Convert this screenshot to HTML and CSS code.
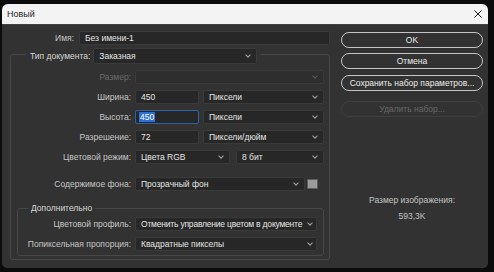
FILE: index.html
```html
<!DOCTYPE html>
<html lang="ru">
<head>
    <meta charset="UTF-8" />
    <title>Новый</title>
    <link rel="stylesheet" href="styles.css">
</head>
<body>
    <div class="window">
        <div class="titlebar">
            <span class="title">Новый</span>
            <svg class="close" width="8" height="8" viewBox="0 0 8 8">
                <path d="M0.5 0.5 L7.5 7.5 M7.5 0.5 L0.5 7.5" stroke="#222" stroke-width="1" fill="none" />
            </svg>
        </div>
        <div class="dialog">
            <div class="left">
                <div class="row name-row">
                    <span class="label name-label">Имя:</span>
                    <div class="field name-field">Без имени-1</div>
                </div>

                <div class="group outer">
                    <div class="group-head">
                        <span class="head-label">Тип документа:</span>
                        <div class="field select doc-type"><span class="txt">Заказная</span><i class="chev"></i></div>
                    </div>

                    <div class="rows">
                        <div class="row">
                            <span class="label disabled">Размер:</span>
                            <div class="field select wide off"><span class="txt"></span><i class="chev"></i></div>
                        </div>
                        <div class="row">
                            <span class="label">Ширина:</span>
                            <div class="field num">450</div>
                            <div class="field select unit"><span class="txt">Пиксели</span><i class="chev"></i></div>
                        </div>
                        <div class="row">
                            <span class="label">Высота:</span>
                            <div class="field num focus"><span class="sel">450</span></div>
                            <div class="field select unit"><span class="txt">Пиксели</span><i class="chev"></i></div>
                        </div>
                        <div class="row">
                            <span class="label">Разрешение:</span>
                            <div class="field num">72</div>
                            <div class="field select unit"><span class="txt">Пиксели/дюйм</span><i class="chev"></i></div>
                        </div>
                        <div class="row">
                            <span class="label">Цветовой режим:</span>
                            <div class="field select mode"><span class="txt">Цвета RGB</span><i class="chev"></i></div>
                            <div class="field select depth"><span class="txt">8 бит</span><i class="chev"></i></div>
                        </div>
                    </div>

                    <div class="row bg-row">
                        <span class="label">Содержимое фона:</span>
                        <div class="field select bg"><span class="txt">Прозрачный фон</span><i class="chev"></i></div>
                        <span class="swatch"></span>
                    </div>

                    <div class="group inner">
                        <div class="inner-head">Дополнительно</div>
                        <div class="rows inner-rows">
                            <div class="row">
                                <span class="label">Цветовой профиль:</span>
                                <div class="field select profile"><span class="txt tight">Отменить управление цветом в документе</span><i class="chev"></i></div>
                            </div>
                            <div class="row">
                                <span class="label">Попиксельная пропорция:</span>
                                <div class="field select profile"><span class="txt">Квадратные пикселы</span><i class="chev"></i></div>
                            </div>
                        </div>
                    </div>
                </div>
            </div>

            <div class="right">
                <button class="btn ok">OK</button>
                <button class="btn cancel">Отмена</button>
                <button class="btn save">Сохранить набор параметров...</button>
                <button class="btn remove" disabled>Удалить набор...</button>
                <div class="info">
                    <div>Размер изображения:</div>
                    <div>593,3K</div>
                </div>
            </div>
        </div>
    </div>
</body>
</html>
```

FILE: styles.css
```css
/* Reset and general styles */
* {
    box-sizing: border-box;
    margin: 0;
    padding: 0;
}
body {
    width: 494px;
    height: 272px;
    overflow: hidden;
    background-color: #0b0b0b;
    font-family: "Liberation Sans", Arial, sans-serif;
    font-size: 8.5px;
    color: #c6c6c6;
}

/* Window frame */
.window {
    margin: 4px 0 0 2px;
    width: 486px;
    height: 264px;
    background-color: #323232;
    border-radius: 6px 6px 5px 5px;
    overflow: hidden;
}
.titlebar {
    height: 20px;
    display: flex;
    justify-content: space-between;
    align-items: center;
    padding: 0 6px 0 5px;
    background-color: #f3f3f3;
    color: #1f1f1f;
    font-size: 9px;
}
.dialog {
    display: flex;
    gap: 11px;
    height: 244px;
    padding: 6px 5px 0 8px;
    border-top: 1px solid #3e3e3e;
}

/* Left column */
.left {
    width: 320px;
}
.row {
    display: flex;
    align-items: center;
    gap: 4px;
    height: 14px;
}
.label {
    width: 114px;
    text-align: right;
    white-space: nowrap;
}
.label.disabled {
    color: #6a6a6a;
}
.name-row {
    gap: 5px;
}
.name-label {
    width: 64px;
}
.field {
    height: 14px;
    display: flex;
    align-items: center;
    padding: 0 5px;
    background-color: #272727;
    border: 1px solid #3a3a3a;
    border-radius: 2px;
    color: #e4e4e4;
    white-space: nowrap;
}
.txt {
    flex: 1;
    overflow: hidden;
}
.tight {
    letter-spacing: -0.2px;
}
.name-field {
    width: 251px;
}
.chev {
    width: 4px;
    height: 4px;
    margin: -3px 1px 0 3px;
    border-right: 1px solid #a4a4a4;
    border-bottom: 1px solid #a4a4a4;
    transform: rotate(45deg);
    flex-shrink: 0;
}
.off {
    background-color: #2e2e2e;
}
.off .chev {
    border-color: #5a5a5a;
}

/* Document group */
.group {
    border: 1px solid #474747;
    border-radius: 3px;
}
.outer {
    margin-top: 9px;
    padding: 0 5px 3px 6px;
}
.group-head {
    width: fit-content;
    height: 16px;
    display: flex;
    align-items: center;
    gap: 3px;
    margin: -7px 0 0 9px;
    padding: 0 4px;
    background-color: #323232;
    color: #d6d6d6;
}
.doc-type {
    width: 164px;
    height: 16px;
}
.rows {
    display: flex;
    flex-direction: column;
    gap: 6px;
    margin-top: 6px;
}
.wide {
    width: 189px;
}
.num {
    width: 64px;
}
.unit {
    width: 121px;
}
.focus {
    border-color: #2b62ad;
    padding-left: 3px;
}
.sel {
    background-color: #2f6fd2;
    color: #ffffff;
    padding: 0 1px;
}
.mode {
    width: 95px;
}
.depth {
    width: 88px;
    margin-left: 2px;
}
.bg-row {
    margin-top: 13px;
}
.bg {
    width: 170px;
}
.swatch {
    width: 11px;
    height: 10px;
    margin-left: -2px;
    background-color: #9c9c9c;
    border: 1px solid #5c5c5c;
}

/* Advanced group */
.inner {
    width: 307px;
    margin-top: 17px;
    padding-bottom: 4px;
}
.inner-head {
    width: fit-content;
    margin: -6px 0 0 10px;
    padding: 0 3px;
    line-height: 10px;
    background-color: #323232;
    color: #d8d8d8;
}
.inner-rows {
    margin-top: 4px;
}
.inner-rows .label {
    width: 113px;
}
.profile {
    width: 182px;
    padding-right: 3px;
}

/* Right column */
.right {
    width: 142px;
    display: flex;
    flex-direction: column;
}
.btn {
    height: 16px;
    background: none;
    border: 1px solid #c4c4c4;
    border-radius: 8px;
    color: #ececec;
    font-family: inherit;
    font-size: 8.5px;
}
.ok {
    margin-top: 1px;
}
.cancel {
    margin-top: 5px;
}
.save {
    margin-top: 6px;
}
.remove {
    margin-top: 10px;
    border-color: #3e3e3e;
    color: #686868;
}
.info {
    margin-top: 77px;
    display: flex;
    flex-direction: column;
    gap: 4px;
    line-height: 12px;
    text-align: center;
    color: #c2c2c2;
}
```
